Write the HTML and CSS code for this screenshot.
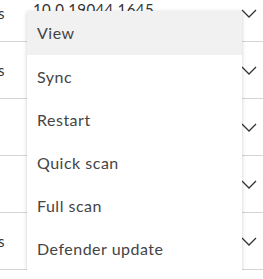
FILE: index.html
```html
<!DOCTYPE html>
<html lang="en">
<head>
    <meta charset="UTF-8">
    <meta name="viewport" content="width=device-width, initial-scale=1.0">
    <title>Devices</title>
  <link rel="stylesheet" href="styles.css">
</head>
<body>

    <div class="device-list">
        <!-- rows behind the action menu -->
        <div class="device-row">
            <div class="device-name"><span>Windows</span></div>
            <div class="device-value device-value-top">10.0.19044.1645</div>
            <svg class="chevron" viewBox="0 0 16 9"><path d="M1 1l7 7 7-7"/></svg>
        </div>
        <div class="device-row">
            <div class="device-name"><span>Windows</span></div>
            <div class="device-value"></div>
            <svg class="chevron" viewBox="0 0 16 9"><path d="M1 1l7 7 7-7"/></svg>
        </div>
        <div class="device-row">
            <div class="device-name"></div>
            <div class="device-value"></div>
            <svg class="chevron" viewBox="0 0 16 9"><path d="M1 1l7 7 7-7"/></svg>
        </div>
        <div class="device-row">
            <div class="device-name"></div>
            <div class="device-value"></div>
            <svg class="chevron" viewBox="0 0 16 9"><path d="M1 1l7 7 7-7"/></svg>
        </div>
        <div class="device-row">
            <div class="device-name"><span>Windows</span></div>
            <div class="device-value"></div>
            <svg class="chevron" viewBox="0 0 16 9"><path d="M1 1l7 7 7-7"/></svg>
        </div>

        <!-- Action menu -->
        <ul class="action-menu">
            <li class="action-item active">View</li>
            <li class="action-item">Sync</li>
            <li class="action-item">Restart</li>
            <li class="action-item">Quick scan</li>
            <li class="action-item">Full scan</li>
            <li class="action-item">Defender update</li>
        </ul>
    </div>

</body>
</html>
```

FILE: styles.css
```css
body {
    margin: 0;
    overflow: hidden;
    background: #fff;
    font-family: Lato, "Noto Sans", sans-serif;
    color: #333;
}
.device-list {
    position: relative;
    margin-top: -15px;
}
.device-row {
    display: flex;
    align-items: center;
    height: 56px;
    border-bottom: 1px solid #d4d4d4;
    font-size: 15px;
    letter-spacing: 0.4px;
}
.device-name {
    width: 5px;
    margin-right: 28px;
    display: flex;
    justify-content: flex-end;
    overflow: hidden;
    white-space: nowrap;
}
.device-value {
    flex-grow: 1;
    white-space: nowrap;
}
.device-value-top {
    padding-bottom: 9px;
}
.chevron {
    width: 16px;
    height: 9px;
    margin-right: 6px;
    fill: none;
    stroke: #333;
    stroke-width: 1.3;
}
.action-menu {
    position: absolute;
    top: 26px; /* 11px below the top of the window */
    left: 27px;
    width: 215px;
    margin: 0;
    padding: 0;
    list-style: none;
    background: #fff;
    box-shadow: 0 1px 4px rgba(0, 0, 0, 0.2);
}
.action-item {
    height: 43px;
    line-height: 43px;
    padding-left: 10px;
    font-size: 16px;
    letter-spacing: 0.5px;
    color: #444;
}
.action-item.active {
    height: 44px;
    background: #f1f1f1;
}
```
